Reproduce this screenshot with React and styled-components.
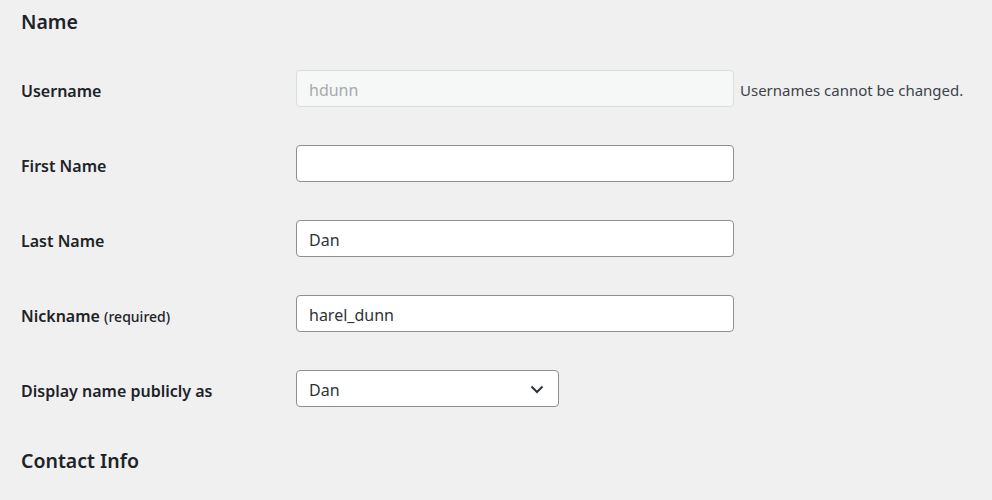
import React from "react";
import styled, { createGlobalStyle } from "styled-components";

const Global = createGlobalStyle`
  html, body {
    margin: 0;
    background: #f0f0f1;
    font-family: "Noto Sans", "Open Sans", sans-serif;
    color: #1d2327;
  }
`;

const Page = styled.div`
  padding: 0 21px;
  width: 992px;
  box-sizing: border-box;
`;

const Heading = styled.h2`
  margin: ${(p) => (p.$first ? "8px 0 15px" : "21px 0 0")};
  font-size: 19.5px;
  line-height: 28px;
  font-weight: 600;
  color: #1d2327;
`;

const Row = styled.div`
  display: grid;
  grid-template-columns: 275px auto;
  align-items: center;
  height: 75px;
`;

const Label = styled.label`
  padding-top: 4px;
  font-size: 16px;
  font-weight: 600;
  color: #1d2327;
`;

const Small = styled.span`
  font-size: 14px;
  font-weight: 500;
`;

const Field = styled.div`
  display: flex;
  align-items: center;
  gap: 6px;
`;

const Input = styled.input`
  box-sizing: border-box;
  width: 438px;
  height: 37px;
  padding: 2px 12px 0;
  border: 1px solid ${(p) => (p.disabled ? "#dcdcde" : "#8c8f94")};
  border-radius: 4px;
  background: ${(p) => (p.disabled ? "#f6f7f7" : "#fff")};
  color: ${(p) => (p.disabled ? "#a7aaad" : "#2c3338")};
  font-family: inherit;
  font-size: 16px;
  outline: none;
`;

const Hint = styled.span`
  padding-top: 3px;
  font-size: 15px;
  color: #3c434a;
`;

const Select = styled.div`
  box-sizing: border-box;
  width: 263px;
  height: 37px;
  padding: 2px 14px 0 12px;
  border: 1px solid #8c8f94;
  border-radius: 4px;
  background: #fff;
  color: #2c3338;
  font-size: 16px;
  display: flex;
  align-items: center;
  justify-content: space-between;
`;

const Chevron = () => (
  <svg width="14" height="9" viewBox="0 0 14 9" fill="none">
    <path d="M1.5 1.5 L7 7 L12.5 1.5" stroke="#2c3338" strokeWidth="2" />
  </svg>
);

export default function App() {
  return (
    <Page>
      <Global />
      <Heading $first>Name</Heading>
      <Row>
        <Label>Username</Label>
        <Field>
          <Input disabled defaultValue="hdunn" />
          <Hint>Usernames cannot be changed.</Hint>
        </Field>
      </Row>
      <Row>
        <Label>First Name</Label>
        <Field>
          <Input defaultValue="" />
        </Field>
      </Row>
      <Row>
        <Label>Last Name</Label>
        <Field>
          <Input defaultValue="Dan" />
        </Field>
      </Row>
      <Row>
        <Label>
          Nickname <Small>(required)</Small>
        </Label>
        <Field>
          <Input defaultValue="harel_dunn" />
        </Field>
      </Row>
      <Row>
        <Label>Display name publicly as</Label>
        <Field>
          <Select>
            <span>Dan</span>
            <Chevron />
          </Select>
        </Field>
      </Row>
      <Heading>Contact Info</Heading>
    </Page>
  );
}
